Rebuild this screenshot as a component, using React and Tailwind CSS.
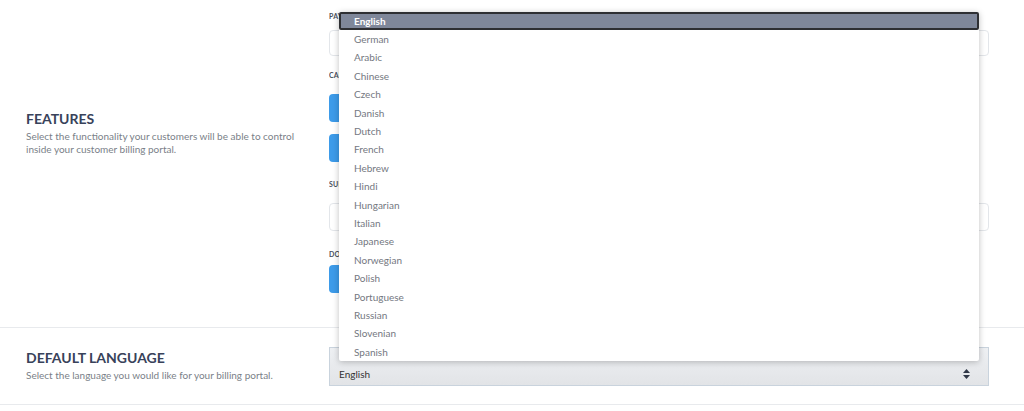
import React from 'react';

const languages = ['English', 'German', 'Arabic', 'Chinese', 'Czech', 'Danish', 'Dutch', 'French', 'Hebrew', 'Hindi', 'Hungarian', 'Italian', 'Japanese', 'Norwegian', 'Polish', 'Portuguese', 'Russian', 'Slovenian', 'Spanish'];

// labels sit under the open dropdown, only the first letters show
const FieldLabel = ({ children }) => (
    <div className='w-[10px] overflow-hidden whitespace-nowrap text-[7px] font-bold uppercase tracking-wide text-[#4a4f5c] leading-none'>{children}</div>
);

const App = () => {
    return (
        <div className='relative w-full h-[411px] bg-white overflow-hidden' style={{ fontFamily: 'Lato, "Open Sans", sans-serif' }}>
            {/* features */}
            <div className='flex h-[328px] border-b border-[#e8eaed]'>
                <div className='w-[329px] pl-[26px] pt-[111px]'>
                    <h2 className='text-[14px] font-bold uppercase text-[#38425a] leading-[16px]'>Features</h2>
                    <p className='mt-[3px] text-[10px] leading-[12.5px] text-[#7a7f88] w-[280px]'>
                        Select the functionality your customers will be able to control inside your customer billing portal.
                    </p>
                </div>
                <div className='flex-1 pr-[35px] pt-[13px]'>
                    <FieldLabel>Payment methods</FieldLabel>
                    <div className='mt-[10px] h-[26px] border border-[#e3e6ea] rounded-sm bg-white'></div>
                    <div className='mt-[16px]'><FieldLabel>Cancellations</FieldLabel></div>
                    <div className='mt-[15px] h-[28px] w-[140px] rounded-sm bg-[#3d9be9]'></div>
                    <div className='mt-[12px] h-[28px] w-[140px] rounded-sm bg-[#3d9be9]'></div>
                    <div className='mt-[19px]'><FieldLabel>Subscriptions</FieldLabel></div>
                    <div className='mt-[15px] h-[28px] border border-[#e3e6ea] rounded-sm bg-white'></div>
                    <div className='mt-[20px]'><FieldLabel>Downloads</FieldLabel></div>
                    <div className='mt-[7px] h-[28px] w-[140px] rounded-sm bg-[#3d9be9]'></div>
                </div>
            </div>

            {/* default language */}
            <div className='flex h-[77px] border-b border-[#e8eaed]'>
                <div className='w-[329px] pl-[26px] pt-[22px]'>
                    <h2 className='text-[14px] font-bold uppercase text-[#38425a] leading-[16px]'>Default Language</h2>
                    <p className='mt-[3px] text-[10px] leading-[12.5px] text-[#7a7f88]'>
                        Select the language you would like for your billing portal.
                    </p>
                </div>
                <div className='flex-1 pr-[35px] pt-[19px]'>
                    <div className='h-[39px] border border-[#c9d3dd] bg-gradient-to-b from-[#eef0f3] to-[#e2e4e7] flex items-center justify-between pl-[9px] pr-[18px]'>
                        <span className='text-[10px] text-[#333] pt-[16px]'>English</span>
                        <svg width='7' height='10' viewBox='0 0 7 10' className='mt-[14px]'>
                            <path d='M3.5 0 L7 4 L0 4 Z' fill='#2f3747' />
                            <path d='M0 6 L7 6 L3.5 10 Z' fill='#2f3747' />
                        </svg>
                    </div>
                </div>
            </div>

            {/* open dropdown */}
            <div className='absolute left-[339px] top-[12px] w-[640px] bg-white shadow-[0_1px_6px_rgba(0,0,0,0.25)] rounded-[2px]'>
                {languages.map((lang, i) => (
                    <div
                        key={lang}
                        className={`h-[18.4px] flex items-center pl-[13px] text-[10px] ${i === 0 ? 'bg-[#7f879a] text-white font-bold border-2 border-[#2e2f33] rounded-[2px]' : 'text-[#74787f] border-2 border-transparent'}`}
                    >
                        {lang}
                    </div>
                ))}
            </div>
        </div>
    );
};

export default App;
